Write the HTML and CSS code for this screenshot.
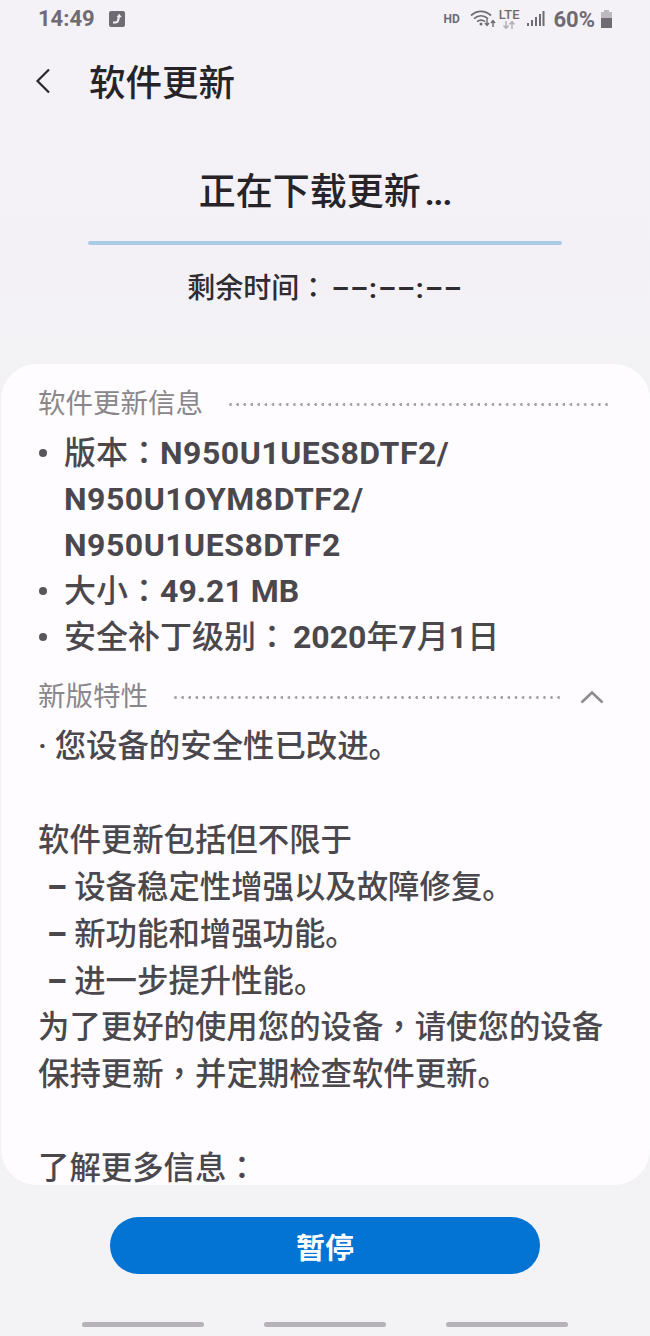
FILE: index.html
```html
<!DOCTYPE html>
<html lang="zh-CN">
<head>
<meta charset="utf-8">
<title>软件更新</title>
<link rel="stylesheet" href="styles.css">
</head>
<body>
<div class="screen">
  <header class="status">
    <div class="status-left">
      <span class="clock">14:49</span>
      <svg class="notif" width="16" height="16" viewBox="0 0 16 16"><rect width="16" height="16" rx="2" fill="#6f6b72"/><path d="M4 11.5h2.5c2 0 2.6-1.2 3-3.5L10 5" fill="none" stroke="#f3f1f6" stroke-width="2"/><path d="M7.6 6.2 10.2 2.8l2.6 3.4z" fill="#f3f1f6"/></svg>
    </div>
    <div class="status-right">
      <span class="hd">HD</span>
      <svg class="wifi" width="27" height="20" viewBox="0 0 27 20"><g fill="none" stroke="#6f6b72" stroke-width="1.7"><path d="M1 6.5C7 1 15 1 21 6.5"/><path d="M4 9.6c4.300-3.700 9.700-3.700 14 0"/><path d="M7 12.600c2.600-2 5.400-2 8 0"/></g><circle cx="11" cy="15" r="1.500" fill="#6f6b72"/><path d="M17 10v6m-2-2 2 2.500 2-2.500M23 18v-6m-2 2 2-2.500 2 2.500" fill="none" stroke="#6f6b72" stroke-width="1.400"/></svg>
      <span class="lte-box"><span class="lte">LTE</span><svg width="16" height="8" viewBox="0 0 16 8"><path d="M5 0v7M2.500 4.500 5 7.500l2.500-3M11 8V1M8.500 3.500 11 .5l2.500 3" fill="none" stroke="#b5b2b8" stroke-width="1.500"/></svg></span>
      <svg class="signal" width="18" height="18" viewBox="0 0 18 18"><g fill="#6f6b72"><rect x="0" y="13" width="2" height="3"/><rect x="4" y="10" width="2" height="6"/><rect x="8" y="7" width="2" height="9"/><rect x="12" y="4" width="2" height="12"/><rect x="15.500" y="1" width="2" height="15"/></g></svg>
      <span class="pct">60%</span>
      <svg class="battery" width="13" height="18" viewBox="0 0 13 18"><path d="M4 0h5v2h3v6H1V2h3z" fill="#bdbabf"/><rect x="1" y="8" width="11" height="10" fill="#6f6b72"/></svg>
    </div>
  </header>

  <div class="appbar">
    <svg class="back" width="18" height="28" viewBox="0 0 18 28"><path d="M15 2.500 3.500 14 15 25.500" fill="none" stroke="#2a282c" stroke-width="2.200"/></svg>
    <h1 class="title">软件更新</h1>
  </div>

  <section class="progress">
    <h2 class="progress-title">正在下载更新<span class="ellipsis">...</span></h2>
    <div class="bar"></div>
    <p class="remaining">剩余时间<span class="tc" lang="zh-TW">：</span><span class="clock-dashes">––:––:––</span></p>
  </section>

  <main class="card">
    <div class="section-head">
      <span class="label">软件更新信息</span>
      <span class="dots"></span>
    </div>
    <ul class="info">
      <li>版本<span class="tc" lang="zh-TW">：</span><span class="code">N950U1UES8DTF2/<br>N950U1OYM8DTF2/<br>N950U1UES8DTF2</span></li>
      <li>大小<span class="tc" lang="zh-TW">：</span><span class="num">49.21 MB</span></li>
      <li>安全补丁级别<span class="tc" lang="zh-TW">：</span> <span class="num date">2020</span>年<span class="num">7</span>月<span class="num">1</span>日</li>
    </ul>
    <div class="section-head section-second">
      <span class="label">新版特性</span>
      <span class="dots dots-short"></span>
      <svg class="chevron" width="24" height="14" viewBox="0 0 24 14"><path d="M1.500 12.500 12 2.500l10.500 10" fill="none" stroke="#8e8b91" stroke-width="2.600"/></svg>
    </div>
    <div class="notes">
      <p>· 您设备的安全性已改进。</p>
      <p class="blank">&nbsp;</p>
      <p>软件更新包括但不限于</p>
      <p class="sub"><span class="dash">–</span> 设备稳定性增强以及故障修复。</p>
      <p class="sub"><span class="dash">–</span> 新功能和增强功能。</p>
      <p class="sub"><span class="dash">–</span> 进一步提升性能。</p>
      <p>为了更好的使用您的设备<span class="tc" lang="zh-TW">，</span>请使您的设备</p>
      <p>保持更新<span class="tc" lang="zh-TW">，</span>并定期检查软件更新。</p>
      <p class="blank">&nbsp;</p>
      <p>了解更多信息<span class="tc" lang="zh-TW">：</span></p>
    </div>
  </main>

  <div class="actions">
    <button class="pause" type="button">暂停</button>
  </div>

  <nav class="navbar">
    <span class="pill"></span>
    <span class="pill"></span>
    <span class="pill"></span>
  </nav>
</div>
</body>
</html>
```

FILE: styles.css
```css
* { box-sizing: border-box; }

html, body {
  margin: 0;
  padding: 0;
}

body {
  width: 650px;
  height: 1336px;
  overflow: hidden;
  background: #f3f1f6;
  font-family: Roboto, "Noto Sans CJK SC", sans-serif;
  color: #4b484d;
}

.screen {
  display: flex;
  flex-direction: column;
  height: 1336px;
  background: linear-gradient(#f4f1f7, #f3f1f6 20%, #f2f2f4 30%, #f3f2f5);
}

.tc {
  font-family: "Noto Sans CJK TC", sans-serif;
  line-height: 0;
}

.status {
  display: flex;
  justify-content: space-between;
  align-items: center;
  height: 38px;
  padding: 0 37px 0 38px;
  color: #6f6b72;
}

.status-left, .status-right {
  display: flex;
  align-items: center;
}

.clock {
  font-size: 22px;
  font-weight: 700;
  line-height: 38px;
}

.notif { margin-left: 14px; }

.hd {
  font-size: 12px;
  font-weight: 700;
  margin-right: 10px;
}

.wifi { margin-right: 2px; }

.lte-box {
  display: flex;
  flex-direction: column;
  align-items: center;
  margin-right: 8px;
}

.lte {
  font-size: 13px;
  font-weight: 500;
  line-height: 12px;
}

.signal { margin-right: 8px; }

.pct {
  font-size: 22px;
  font-weight: 700;
  margin-right: 5px;
}

.appbar {
  display: flex;
  align-items: center;
  height: 86px;
  padding: 0 0 0 34px;
}

.back { flex: none; }

.title {
  margin: 0 0 0 37px;
  font-size: 36.500px;
  font-weight: 500;
  line-height: 1;
  color: #262428;
  font-family: "Noto Sans CJK SC", sans-serif;
}

.progress {
  display: flex;
  flex-direction: column;
  align-items: center;
  height: 240px;
}

.progress-title {
  margin: 44px 0 0;
  font-size: 37px;
  font-weight: 500;
  line-height: 50px;
  color: #262428;
}

.ellipsis {
  font-weight: 700;
  font-size: 34px;
  line-height: 0;
  letter-spacing: -1px;
  margin-left: 4px;
}

.bar {
  width: 474px;
  height: 4px;
  margin-top: 23px;
  border-radius: 2px;
  background: #a9cbe6;
}

.remaining {
  margin: 24px 0 0;
  font-size: 28px;
  font-weight: 500;
  line-height: 40px;
  color: #2f2d31;
}

.clock-dashes {
  font-weight: 700;
  line-height: 0;
  letter-spacing: 1.200px;
  margin-left: 4px;
}

.card {
  height: 821px;
  margin: 0 0 0 1px;
  padding: 20px 39px 0 37px;
  overflow: hidden;
  border-radius: 36px;
  background: #fefcfe;
}

.section-head {
  display: flex;
  align-items: center;
  height: 40px;
}

.label {
  flex: none;
  font-size: 27.500px;
  line-height: 40px;
  color: #8a878c;
}

.dots {
  flex: 1;
  height: 3px;
  margin-left: 26px;
  background-image: radial-gradient(circle at 1.500px 1.500px, #a3a0a6 1.300px, transparent 1.500px);
  background-size: 7.100px 3px;
  background-repeat: repeat-x;
}

.dots-short { margin-right: 20px; margin-left: 26px; }

.chevron { flex: none; margin-right: 7px; }

.section-second { margin-top: 17px; }

.info {
  margin: 6px 0 0;
  padding: 0;
  list-style: none;
}

.info li {
  position: relative;
  padding-left: 26px;
  font-size: 32px;
  font-weight: 500;
  line-height: 46px;
  color: #4b484d;
}

.info li::before {
  content: "";
  position: absolute;
  left: 1px;
  top: 19px;
  width: 8px;
  height: 8px;
  border-radius: 50%;
  background: #59565b;
}

.code { font-weight: 700; letter-spacing: .5px; }

.num {
  font-weight: 700;
  line-height: 0;
}

.date { margin-left: -3px; }

.notes {
  margin-top: 7px;
  font-size: 31.400px;
  font-weight: 500;
  color: #4b484d;
}

.notes p {
  margin: 0;
  line-height: 46.900px;
  white-space: nowrap;
}

.notes .sub { padding-left: 9px; }

.dash {
  font-weight: 900;
  line-height: 0;
}

.actions {
  display: flex;
  justify-content: center;
  padding-top: 32px;
}

.pause {
  width: 430px;
  height: 57px;
  padding: 0;
  border: 0;
  border-radius: 29px;
  background: #0373d4;
  color: #fff;
  font-family: inherit;
  font-size: 29px;
  font-weight: 700;
}

.navbar {
  display: flex;
  justify-content: space-between;
  margin-top: 48px;
  padding: 0 82px;
}

.pill {
  width: 122px;
  height: 5px;
  border-radius: 3px;
  background: #b5b2b8;
}
```
